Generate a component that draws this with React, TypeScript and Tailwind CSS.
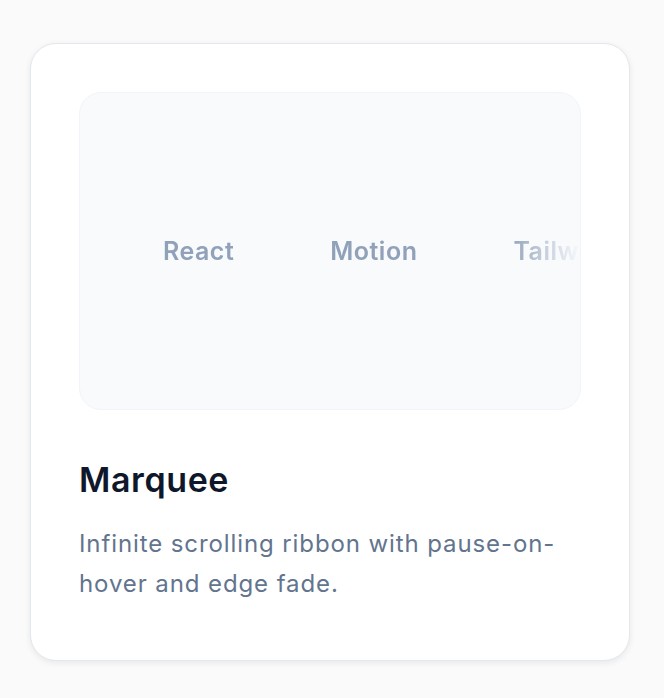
import React from 'react';

export default function App() {
  const items = ['React', 'Motion', 'Tailwind', 'TypeScript'];

  return (
    <div className="min-h-screen bg-[#fafafa] px-[30px] pt-[43px] font-['Inter',_sans-serif]">
      <div className="w-[600px] rounded-[26px] border border-slate-200 bg-white p-[48px] pb-[56px] shadow-[0_2px_6px_rgba(15,23,42,0.08)]">
        {/* Preview area */}
        <div className="flex h-[318px] items-center overflow-hidden rounded-[22px] border border-slate-100 bg-slate-50">
          <div className="flex w-full items-center overflow-hidden pt-[2px] [mask-image:linear-gradient(to_right,transparent,black_64px,black_calc(100%-72px),transparent)]">
            <div className="flex shrink-0 items-center gap-[96px] pl-[83px]">
              {items.map((item) => (
                <span key={item} className="whitespace-nowrap text-[25px] font-semibold tracking-[0.5px] text-slate-400">
                  {item}
                </span>
              ))}
            </div>
          </div>
        </div>

        <h3 className="mt-[50px] text-[34px] font-semibold leading-[40px] tracking-[0.6px] text-slate-900">Marquee</h3>
        <p className="mt-[24px] text-[24px] leading-[40px] tracking-[0.9px] text-slate-500">
          Infinite scrolling ribbon with pause-on-hover and edge fade.
        </p>
      </div>
    </div>
  );
}
